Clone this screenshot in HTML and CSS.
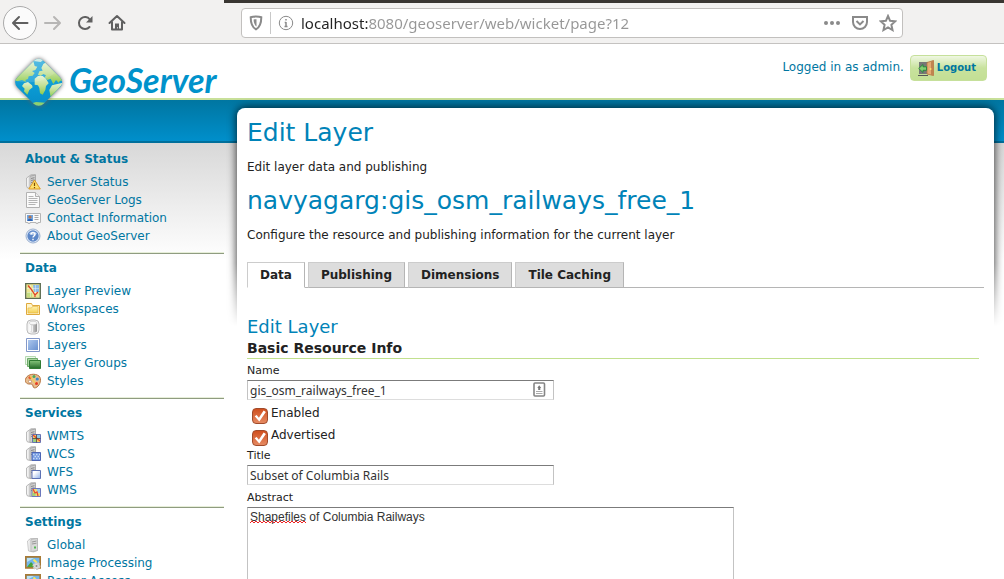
FILE: index.html
```html
<!DOCTYPE html>
<html lang="en">
<head>
<meta charset="utf-8">
<title>GeoServer: Edit Layer</title>
<link rel="stylesheet" href="styles.css">
</head>
<body>
<svg class="sprite" aria-hidden="true">
  <defs>
    <linearGradient id="g-steel" x2="1"><stop offset="0" stop-color="#fff"/><stop offset=".5" stop-color="#c9c9c9"/><stop offset="1" stop-color="#909090"/></linearGradient>
    <linearGradient id="g-blue" x2="1" y2="1"><stop offset="0" stop-color="#acc7ee"/><stop offset="1" stop-color="#6a91d0"/></linearGradient>
    <linearGradient id="g-folder" x2="0" y2="1"><stop offset="0" stop-color="#fff3b0"/><stop offset="1" stop-color="#f3cf51"/></linearGradient>
    <linearGradient id="g-green" x2="0" y2="1"><stop offset="0" stop-color="#86c57c"/><stop offset="1" stop-color="#236a28"/></linearGradient>
    <linearGradient id="g-white" x2="1" y2="1"><stop offset=".3" stop-color="#fff"/><stop offset="1" stop-color="#8fb0e8"/></linearGradient>
    <linearGradient id="g-sea" x2="1" y2="1"><stop offset="0" stop-color="#44b5df"/><stop offset=".6" stop-color="#0a9ad3"/><stop offset="1" stop-color="#078bc5"/></linearGradient>
    <linearGradient id="g-land" x2="0" y2="1"><stop offset="0" stop-color="#e4f2d2"/><stop offset=".5" stop-color="#c3e097"/><stop offset="1" stop-color="#8ccb4c"/></linearGradient>
    <clipPath id="gem"><rect x="36" y="41" width="112" height="112" rx="21" transform="rotate(45 92 97)"/></clipPath>
  </defs>
  <symbol id="tower" viewBox="0 0 16 16">
    <path d="M1.500 4 6 .8h4.500v12L7 14.500 2.500 14 1.500 12Z" fill="url(#g-steel)" stroke="#aaa" stroke-width=".8"/>
    <path d="M5 2.500 10.500 1v12.500L5 14.500Z" fill="#d0d0d0" stroke="#999" stroke-width=".5"/>
    <path d="M6 4.500 9.500 3.700M6 6.500 9.500 5.800M6 8.500l3.500-.5" stroke="#888"/>
  </symbol>
  <symbol id="i-status" viewBox="0 0 16 16"><use href="#tower"/><path d="M9.500 6 15.300 15H3.800Z" fill="#fde06a" stroke="#dd9a22" stroke-linejoin="round"/><path d="M9.500 8.800v3.200M9.500 13v1.200" stroke="#7a4a00" stroke-width="1.200"/></symbol>
  <symbol id="i-logs" viewBox="0 0 16 16"><path d="M1.500.5h9l4 4v11h-13Z" fill="#fbfbfb" stroke="#b2b2b2"/><path d="M10.500.5v4h4" fill="#eee" stroke="#b2b2b2"/><path d="M3.500 4.500h5M3.500 6.500h9M3.500 8.500h9M3.500 10.500h9M3.500 12.500h7" stroke="#b5b5b5"/></symbol>
  <symbol id="i-contact" viewBox="0 0 16 16"><path d="M.5 3.500h15v9H13v.9h-2v-.9H5v.9H3v-.9H.5Z" fill="#fafafa" stroke="#b5b5b5"/><path d="M2 5h6v6H2Z" fill="#6fa4e0"/><circle cx="5" cy="7" r="1.600" fill="#b5754f"/><path d="M2.500 11c0-3 5-3 5 0Z" fill="#2d63b3"/><path d="M9.500 5.500h4M9.500 7.500h4M9.500 9.500h4" stroke="#aaa"/></symbol>
  <symbol id="i-about" viewBox="0 0 16 16"><circle cx="8" cy="8" r="7" fill="#e5edf8" stroke="#9ab0d0"/><circle cx="8" cy="8" r="5.700" fill="#5c87c8"/><path d="M4 5.500a5 5 0 0 1 8 0c-2 2-6 2-8 0Z" fill="#a8c2e8"/><path d="M6 6.500C6 4 10 4 10 6.300 10 8 8 7.900 8 9.600M8 10.800v1.400" fill="none" stroke="#fff" stroke-width="1.400"/></symbol>
  <symbol id="i-preview" viewBox="0 0 16 16"><path d="M.7.7h14.600v14.600H.7Z" fill="#ece793" stroke="#5b6b50" stroke-width="1.300"/><path d="M8 2h6v7H9Z" fill="#8dbce8"/><path d="M2 9h5v5H2Z" fill="#c4dc80"/><path d="M2 5.500h12M2 9.500h12M5.500 2v12M10.500 2v12" stroke="#fff" stroke-width=".5" opacity=".8"/><path d="M3 2.500 6 6l4 6 3-3M10 12v2" fill="none" stroke="#df4428" stroke-width="1.300"/></symbol>
  <symbol id="i-folder" viewBox="0 0 16 16"><path d="M1.500 13.500v-11h5l1 2h7v9Z" fill="#fff5c9" stroke="#dfa93d"/><path d="M3 12V7h3.500l1-1.500H13V12Z" fill="url(#g-folder)" stroke="#e7b84c" stroke-width=".7"/></symbol>
  <symbol id="i-store" viewBox="0 0 16 16"><rect x="2" y="1" width="12" height="14" rx="4" fill="#f3f3f3" stroke="#bbb"/><path d="M4 4v8.500c2 1.600 6 1.600 8 0V4Z" fill="url(#g-steel)"/><ellipse cx="8" cy="4" rx="4" ry="1.700" fill="#f7f7f7" stroke="#bbb" stroke-width=".5"/><path d="M5.500 6v6M7.500 6.500V13" stroke="#fff" stroke-width=".7"/></symbol>
  <symbol id="i-layer" viewBox="0 0 16 16"><path d="M1.500 1.500h13v13h-13Z" fill="#fff" stroke="#8398c9"/><path d="M3 3h10v10H3Z" fill="url(#g-blue)"/></symbol>
  <symbol id="i-group" viewBox="0 0 16 16"><path d="M.5 1.500h10v8H.5Z" fill="#eef8ec" stroke="#b5d9b1"/><path d="M2.500 3.500h10v8h-10Z" fill="#a8d3a1" stroke="#6daa69"/><path d="M4.500 5.500h11v8h-11Z" fill="url(#g-green)" stroke="#317c34"/></symbol>
  <symbol id="i-style" viewBox="0 0 16 16"><path d="M1 5C3 1 10 0 14 3c3 3 1 9-2 11-2 1.500-4 1-4-1s-2-2-4-2-5-2-3-6Z" fill="#e8bd8e" stroke="#b5733f"/><circle cx="5" cy="4.500" r="1.600" fill="#e55a2f"/><circle cx="9" cy="3.500" r="1.500" fill="#4aa95a"/><circle cx="12.300" cy="6" r="1.600" fill="#3c8ad0"/><circle cx="11.500" cy="10.500" r="1.500" fill="#e53d24"/><circle cx="5" cy="8.500" r="1.500" fill="#fff" stroke="#ae7144" stroke-width=".6"/><path d="m5 3 5 7" stroke="#f3d24b" stroke-width="1.200"/></symbol>
  <symbol id="i-wmts" viewBox="0 0 16 16"><use href="#tower"/><path d="M7.500 6.500h8v8h-8Z" fill="#f3ce63" stroke="#6773b5"/><path d="M12 7h3v3h-3Z" fill="#8ccaec"/><path d="M8 11h3v3H8Z" fill="#9ad07b"/><path d="m8 7 7 6" stroke="#e64931" stroke-width="1.200"/><path d="M11.500 6.500v8M7.500 10.500h8" stroke="#444" stroke-width=".8"/></symbol>
  <symbol id="i-wcs" viewBox="0 0 16 16"><use href="#tower"/><path d="M7 6.500h8.500v8H7Z" fill="#739ae0" stroke="#4d66b5"/><path d="M8 8.500h7M8 12.500h7" stroke="#c6d8f8" stroke-width="1.400" stroke-dasharray="1.500"/><path d="M9.500 10.500h6" stroke="#c6d8f8" stroke-width="1.400" stroke-dasharray="1.500"/></symbol>
  <symbol id="i-wfs" viewBox="0 0 16 16"><use href="#tower"/><path d="M7 6.500h8.500v8H7Z" fill="url(#g-white)" stroke="#5d71b3"/></symbol>
  <symbol id="i-wms" viewBox="0 0 16 16"><use href="#tower"/><path d="M7 6.500h8.500v8H7Z" fill="#eddb77" stroke="#6b77bd"/><path d="M12 7h3v4h-3Z" fill="#9bcbec"/><path d="M7.500 11h3v3h-3Z" fill="#a1d279"/><path d="m8 7 2 4 2-1 1 4" fill="none" stroke="#e64931" stroke-width="1.300"/></symbol>
  <symbol id="i-global" viewBox="0 0 16 16"><path d="m2.500 4 3-2.500h7v12l-4 1.500-5-1Z" fill="url(#g-steel)" stroke="#bbb" stroke-width=".8"/><path d="M6 2.500 12.500 1.500v12L6 14.500Z" fill="#d9d9d9" stroke="#aaa" stroke-width=".5"/><path d="M7 5 11.500 4M7 7l4.500-.8" stroke="#999"/><path d="M10 9.500v2" stroke="#34b234" stroke-width="1.600"/></symbol>
  <symbol id="i-image" viewBox="0 0 16 16"><path d="M.8 1.800h14.400v11H.8Z" fill="#73b6ec" stroke="#a87a35" stroke-width="1.700"/><path d="M2 3h7l-7 4Z" fill="#b9e2f6"/><path d="m2 12 4-5 3 3 2-2 3 4Z" fill="#46a33a"/><path d="M8.500 4.500 12 8" stroke="#f7e85b" stroke-width="2"/><circle cx="11.500" cy="11" r="3" fill="#ddd" stroke="#cdcdcd" stroke-width="2" stroke-dasharray="2 1"/><circle cx="11.500" cy="11" r="1" fill="#888"/></symbol>
</svg>

<div class="toolbar">
  <button class="tool back" type="button" aria-label="Back"><svg width="18" height="16" viewBox="0 0 18 16"><path d="M16.500 8H2.500M8 2 2 8l6 6"/></svg></button>
  <button class="tool forward" type="button" aria-label="Forward"><svg width="18" height="16" viewBox="0 0 18 16"><path d="M1 8h14M10 2l6 6-6 6"/></svg></button>
  <button class="tool" type="button" aria-label="Reload"><svg width="16" height="16" viewBox="0 0 16 16"><path d="M12.500 12A6 6 0 1 1 12.800 4.500"/><path d="M15.500 1v6.500H9Z" class="solid"/></svg></button>
  <button class="tool" type="button" aria-label="Home"><svg width="18" height="18" viewBox="0 0 18 18"><path d="M1.500 9 9 2l7.500 7M4 8v7.500h10V8"/><path d="M7 15V9.500h4V15H9.700v-2H9v2Z" class="solid"/></svg></button>
  <div class="address">
    <svg width="14" height="16" viewBox="0 0 14 16"><path d="M7 1.500c2 0 4 .2 5.300.7 0 6-1.300 10-5.300 12.100C3 12.200 1.700 8.200 1.700 2.200 3 1.700 5 1.500 7 1.500Z"/><path d="M7.500 4.300c-1 0-2 .1-2.900.3.100 3.400.9 5.400 2.900 7Z" class="solid"/></svg>
    <span class="divider"></span>
    <svg width="16" height="16" viewBox="0 0 16 16"><circle class="thin" cx="8" cy="8" r="6.700"/><path class="mid" d="M8 4v1.600M8 7v4.800M6.700 7.500H8M6.500 11.500h3"/></svg>
    <input class="url" type="text" aria-label="Address" value="localhost:8080/geoserver/web/wicket/page?12">
    <button type="button" aria-label="Page actions"><svg width="18" height="16" viewBox="0 0 18 16"><g class="solid"><circle cx="3" cy="8" r="2"/><circle cx="9" cy="8" r="2"/><circle cx="15" cy="8" r="2"/></g></svg></button>
    <button type="button" aria-label="Save to Pocket"><svg width="18" height="16" viewBox="0 0 18 16"><path d="M2 2h14v5a7 7 0 0 1-14 0Z"/><path d="m5.500 6 3.500 3.400L12.500 6"/></svg></button>
    <button type="button" aria-label="Bookmark"><svg width="18" height="18" viewBox="0 0 18 18"><path d="m9 2 2.100 4.800 5.200.5-3.900 3.500 1.100 5.200L9 13.300 4.500 16l1.100-5.200-3.900-3.500 5.200-.5Z"/></svg></button>
  </div>
</div>

<div class="page">
  <header class="header">
    <a class="logo" href="#">
      <svg width="60" height="60" viewBox="0 0 180 180" aria-hidden="true">
        <rect x="36" y="41" width="112" height="112" rx="21" transform="rotate(45 92 97)" fill="url(#g-sea)"/>
        <g clip-path="url(#gem)">
          <path d="M18 90 76 34l4 14 8 2-6 10-10 3 8 6-6 8-12 2-2 8-8 3 2 6-12-6-14 4Z" fill="url(#g-land)"/>
          <path d="m48 100 12-4 12 10 2 6-10 8-6 14-10-10 2-8-8-8Z" fill="url(#g-land)"/>
          <path d="M70 34 92 20l14 10-8 6-16-2Z" fill="#cbe9e2"/>
          <path d="m106 42 6-4 56 54-12 0-4 6-8-8-8 12-8-16-10 4-8-8 4-6-8-4-8 6-8-4 4-10 10-2-4-8Z" fill="url(#g-land)"/>
          <path d="M80 86 90 78h14l10 8 8 14-8 8-2 12-8 14-8-4-2-16-4-8-10-2Z" fill="url(#g-land)"/>
          <path d="m124 120 8-14 16-4 20-4-40 44Z" fill="url(#g-land)"/>
          <path d="m72 160 12-4 28 2-6 16H82Z" fill="#8fd06f"/>
          <path d="M92 20 20 92q70 18 120-22Z" fill="#fff" opacity=".13"/>
        </g>
      </svg>
      <span>GeoServer</span>
    </a>
    <form class="session" onsubmit="return false">
      <a href="#">Logged in as admin.</a>
      <button class="logout" type="submit">
        <svg width="16" height="16" viewBox="0 0 16 16" aria-hidden="true"><path d="M1 2h9v12H1Z" fill="#777"/><path d="M0 15.500h10" stroke="#555"/><path d="M9 2.500 15.500.5v15L9 14Z" fill="#e3ac73" stroke="#b5733f" stroke-width=".8"/><path d="m13 1.500 2.500-1v15L13 15Z" fill="#c08450"/><circle cx="12.500" cy="9" r="1" fill="#ffe06a"/><path d="M.7 8.500 5 4.500v2.300h3.500v3.500H5v2.200Z" fill="#83ce70" stroke="#24843a" stroke-width=".9"/></svg>
        Logout
      </button>
    </form>
  </header>

  <div class="columns">
    <nav class="sidebar">
      <section>
        <h2>About &amp; Status</h2>
        <ul>
          <li><a href="#"><svg><use href="#i-status"/></svg>Server Status</a></li>
          <li><a href="#"><svg><use href="#i-logs"/></svg>GeoServer Logs</a></li>
          <li><a href="#"><svg><use href="#i-contact"/></svg>Contact Information</a></li>
          <li><a href="#"><svg><use href="#i-about"/></svg>About GeoServer</a></li>
        </ul>
      </section>
      <section>
        <h2>Data</h2>
        <ul>
          <li><a href="#"><svg><use href="#i-preview"/></svg>Layer Preview</a></li>
          <li><a href="#"><svg><use href="#i-folder"/></svg>Workspaces</a></li>
          <li><a href="#"><svg><use href="#i-store"/></svg>Stores</a></li>
          <li><a href="#"><svg><use href="#i-layer"/></svg>Layers</a></li>
          <li><a href="#"><svg><use href="#i-group"/></svg>Layer Groups</a></li>
          <li><a href="#"><svg><use href="#i-style"/></svg>Styles</a></li>
        </ul>
      </section>
      <section>
        <h2>Services</h2>
        <ul>
          <li><a href="#"><svg><use href="#i-wmts"/></svg>WMTS</a></li>
          <li><a href="#"><svg><use href="#i-wcs"/></svg>WCS</a></li>
          <li><a href="#"><svg><use href="#i-wfs"/></svg>WFS</a></li>
          <li><a href="#"><svg><use href="#i-wms"/></svg>WMS</a></li>
        </ul>
      </section>
      <section>
        <h2>Settings</h2>
        <ul>
          <li><a href="#"><svg><use href="#i-global"/></svg>Global</a></li>
          <li><a href="#"><svg><use href="#i-image"/></svg>Image Processing</a></li>
          <li><a href="#"><svg><use href="#i-image"/></svg>Raster Access</a></li>
        </ul>
      </section>
    </nav>

    <main class="panel">
      <div class="panel-shadow"></div>
      <div class="panel-body">
        <h1>Edit Layer</h1>
        <p>Edit layer data and publishing</p>
        <h1>navyagarg:gis_osm_railways_free_1</h1>
        <p>Configure the resource and publishing information for the current layer</p>

        <div class="tabs" role="tablist">
          <button type="button" role="tab" aria-selected="true">Data</button>
          <button type="button" role="tab" aria-selected="false">Publishing</button>
          <button type="button" role="tab" aria-selected="false">Dimensions</button>
          <button type="button" role="tab" aria-selected="false">Tile Caching</button>
        </div>

        <form class="form">
          <h2>Edit Layer</h2>
          <h3>Basic Resource Info</h3>
          <label class="caption" for="name">Name</label>
          <div class="field">
            <input id="name" type="text" value="gis_osm_railways_free_1">
            <svg class="autofill" width="13" height="15" viewBox="0 0 13 15" aria-hidden="true"><rect x="1" y="1" width="10.500" height="13" rx="1" fill="#fff" stroke="#858585" stroke-width="1.600"/><path d="M3 11.500h6.500M3 9.500h6.500" stroke="#aaa"/><path d="M6.200 3.200 8.200 6H7.300v2H5.200V6h-.9Z" fill="#777"/></svg>
          </div>
          <div class="checks">
            <label><input type="checkbox" checked>Enabled</label>
            <label><input type="checkbox" checked>Advertised</label>
          </div>
          <label class="caption" for="title">Title</label>
          <div class="field"><input id="title" type="text" value="Subset of Columbia Rails"></div>
          <label class="caption" for="abstract">Abstract</label>
          <div class="area">
            <textarea id="abstract" spellcheck="false">Shapefiles of Columbia Railways</textarea>
            <svg class="squiggle" width="56" height="4" viewBox="0 0 56 4" aria-hidden="true"><path d="m0 3 2-2 2 2 2-2 2 2 2-2 2 2 2-2 2 2 2-2 2 2 2-2 2 2 2-2 2 2 2-2 2 2 2-2 2 2 2-2 2 2 2-2 2 2 2-2 2 2 2-2 2 2 2-2 2 2" fill="none" stroke="#e22"/></svg>
          </div>
        </form>
      </div>
    </main>
  </div>
</div>
</body>
</html>
```
FILE: styles.css
```css
* { box-sizing: border-box; }

body {
  margin: 0;
  height: 100vh;
  overflow: hidden;
  display: flex;
  flex-direction: column;
  background: #fff;
  color: #222;
  font: 12px/18px "DejaVu Sans", sans-serif;
}

a { color: #0076a1; text-decoration: none; }
h1, h2, h3, p, ul { margin: 0; padding: 0; }
button { font: inherit; cursor: pointer; }
.sprite { position: absolute; width: 0; height: 0; }

/* Browser toolbar */
.toolbar {
  flex: none;
  display: flex;
  align-items: center;
  height: 44px;
  padding: 3px 101px 0 3px;
  border-bottom: 1px solid #c4c2c0;
  background: linear-gradient(#393632, #393632) 224px 0 / 100% 3px no-repeat #f2f1f0;
}
.toolbar svg { display: block; fill: none; stroke: #8a8a8a; stroke-width: 2; }
.toolbar .solid { fill: #8a8a8a; stroke: none; }
.toolbar .thin { stroke-width: 1; }
.toolbar .mid { stroke-width: 1.5; }
.tool {
  flex: none;
  display: grid;
  place-items: center;
  width: 32px;
  height: 34px;
  padding: 0;
  border: 0;
  background: none;
}
.tool svg { stroke: #606060; stroke-linecap: round; stroke-linejoin: round; }
.tool .solid { fill: #606060; }
.back { width: 34px; border: 1px solid #aaa; border-radius: 50%; background: #fbfbfb; }
.forward svg { stroke: #b7b6b5; }
.address {
  flex: 1;
  display: flex;
  align-items: center;
  gap: 7px;
  height: 30px;
  margin-left: 108px;
  padding: 0 5px 0 7px;
  border: 1px solid #c2c0be;
  border-radius: 4px;
  background: #fff;
}
.address svg { flex: none; }
.address button { padding: 0; border: 0; background: none; margin-left: 3px; }
.divider { width: 1px; height: 22px; background: #c8c8c8; }
.url {
  flex: 1;
  min-width: 0;
  padding: 0;
  border: 0;
  outline: 0;
  color: transparent;
  background: linear-gradient(90deg, #222 67px, #969696 67px);
  background-clip: text;
  -webkit-background-clip: text;
  font: 15px/22px "Noto Sans", sans-serif;
}

/* Page frame: white strip, green rule, blue band, grey fade */
.page {
  flex: 1;
  min-height: 0;
  background: linear-gradient(#fff 54px, #c8e09a 54px, #c8e09a 56px, #0076a1 56px, #008fcb 97px, #006f9b 97px, #006f9b 99px, #d8d8d8 99px, #fff 216px);
}
.header {
  display: flex;
  justify-content: space-between;
  align-items: flex-start;
  height: 64px;
  padding: 6px 17px 0 8px;
}
.logo {
  display: flex;
  align-items: center;
  gap: 1px;
  color: #0092cb;
  font: italic bold 34px/60px Lato, sans-serif;
}
.logo svg { filter: drop-shadow(0 0 2px #666); }
.session { display: flex; gap: 6px; padding-top: 5px; line-height: 24px; }
.logout {
  display: flex;
  align-items: center;
  gap: 3px;
  height: 26px;
  padding: 0 10px 0 7px;
  border: 1px solid #c6e09b;
  border-radius: 4px;
  background: linear-gradient(#eff7e2, #c8e29d 50%, #c3df95);
  color: #0076a1;
  font-size: 10px;
  font-weight: bold;
}

.columns { display: grid; grid-template-columns: 237px minmax(0, 1fr); }

/* Sidebar */
.sidebar { padding: 37px 13px 0 20px; }
.sidebar section { padding: 5px 5px 7px; }
.sidebar section + section { border-top: 1px solid #8f9c80; box-shadow: 0 -1px #e6eed8; margin-top: 1px; }
.sidebar h2 { margin-bottom: 5px; color: #0076a1; font-size: 12px; line-height: 18px; }
.sidebar ul { list-style: none; }
.sidebar a { display: flex; align-items: center; gap: 6px; }
.sidebar svg { width: 16px; height: 16px; }

/* Content panel */
.panel { position: relative; margin-right: 10px; }
.panel-shadow {
  position: absolute;
  inset: -10px -12px auto;
  height: 232px;
  padding: 10px 12px 0;
  overflow: hidden;
  mask-image: linear-gradient(#000 165px, transparent 228px);
  -webkit-mask-image: linear-gradient(#000 165px, transparent 228px);
}
.panel-shadow::before {
  content: "";
  display: block;
  height: 260px;
  border-radius: 8px;
  box-shadow: 0 0 9px 1px rgba(0, 0, 0, .7);
}
.panel-body {
  position: relative;
  padding: 10px 10px 20px;
  border-radius: 8px;
  background: #fff;
}
h1 { color: #0083b8; font-size: 25px; font-weight: normal; line-height: 30px; }
p { margin: 12px 0; line-height: 14px; }

.tabs {
  display: flex;
  gap: 3px;
  margin-top: 20px;
  box-shadow: inset 0 -1px #b5b5b5;
}
.tabs button {
  height: 26px;
  padding: 0 12px;
  border: 1px solid #b5b5b5;
  border-top-color: #ccc;
  border-left-color: #ccc;
  background: #ddd;
  color: #222;
  font-weight: bold;
}
.tabs [aria-selected="true"] { border-bottom-color: #fff; background: #fff; }

.form { padding: 28px 5px 0 0; }
.form h2 { color: #0083b8; font-size: 18px; font-weight: normal; line-height: 22px; }
.form h3 {
  margin-bottom: 5px;
  border-bottom: 1px solid #c1e08e;
  font-size: 14px;
  line-height: 20px;
}
.caption { display: block; margin-bottom: 2px; font-size: 11px; line-height: 14px; }
.field { position: relative; width: 307px; max-width: 100%; margin-bottom: 6px; }
.field input, textarea {
  display: block;
  width: 100%;
  margin: 0;
  padding: 0 2px;
  border: 1px solid #c3c3c3;
  border-top-color: #7b7b7b;
  border-bottom-color: #ddd;
  border-radius: 0;
  background: #fff;
  color: #333;
}
.field input { height: 20px; font: 12px/18px "Noto Sans", sans-serif; }
.autofill { position: absolute; right: 8px; top: 2px; }
.checks { margin: -4px 0 3px; }
.checks label { display: flex; gap: 3px; height: 22px; padding-left: 5px; line-height: 22px; }
.checks input {
  appearance: none;
  width: 16px;
  height: 16px;
  margin: 6px 0 0;
  border: 1px solid #a14b2b;
  border-radius: 4px;
  background: linear-gradient(#d04f1e, #e58a62);
}
.checks input:checked::before {
  content: "";
  display: block;
  height: 14px;
  background: #fff;
  clip-path: polygon(12% 52%, 26% 42%, 42% 62%, 76% 10%, 92% 22%, 45% 90%);
}
.area { position: relative; width: 487px; max-width: 100%; }
textarea { height: 130px; padding-top: 1px; resize: none; font: 12px/16px "Liberation Sans", sans-serif; }
.squiggle { position: absolute; left: 3px; top: 13px; }
```
